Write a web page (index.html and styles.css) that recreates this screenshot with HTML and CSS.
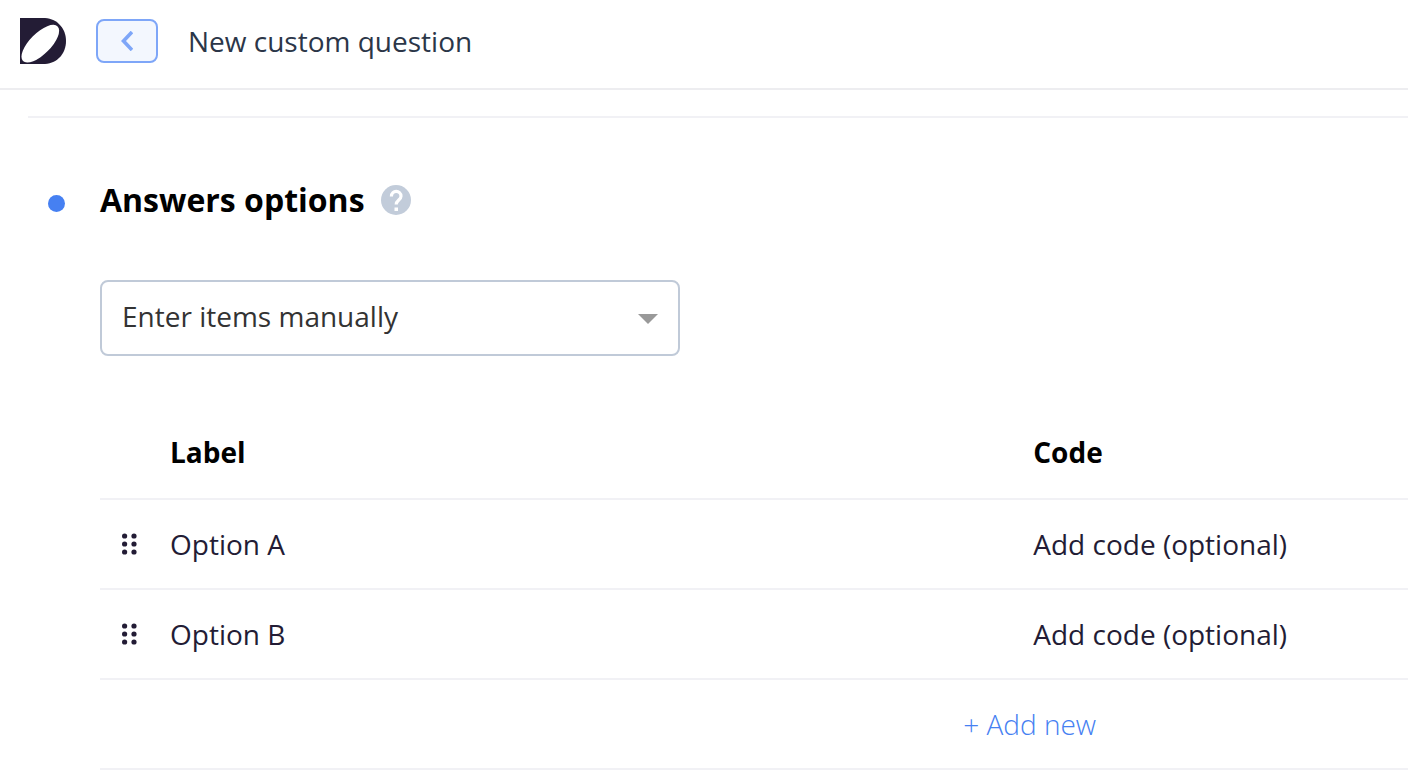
FILE: index.html
```html
<!DOCTYPE html>
<html lang="en">
<head>
    <meta charset="UTF-8">
    <meta name="viewport" content="width=device-width, initial-scale=1.0">
    <title>New custom question</title>
    <link rel="stylesheet" href="styles.css">
</head>
<body>
    <header class="topbar">
        <svg class="logo" viewBox="0 0 46 46" aria-hidden="true">
            <path fill="#231c35" d="M0 0H25C38 1 46 11 46 23S38 45 25 46H0Z"/>
            <ellipse cx="20.300" cy="25.700" rx="24.500" ry="10.500" transform="rotate(-45 20.300 25.700)" fill="#fff"/>
        </svg>
        <button class="back-button" type="button" aria-label="Back">
            <svg width="12" height="20" viewBox="0 0 12 20" aria-hidden="true">
                <path d="M11 1L2.500 10L11 19" fill="none" stroke="#7ea6f8" stroke-width="3.600"/>
            </svg>
        </button>
        <h1 class="page-title">New custom question</h1>
    </header>

    <main class="content">
        <section class="answers">
            <div class="section-head">
                <span class="dot"></span>
                <h2>Answers options</h2>
                <svg class="help" viewBox="0 0 30 30" aria-hidden="true">
                    <circle cx="15" cy="15" r="15" fill="#c2ccda"/>
                    <path d="M10.400 11.500C10.400 4.800 20 4.800 20 11.200C20 15 15.200 15.200 15.200 19.600" fill="none" stroke="#fff" stroke-width="3.200"/>
                    <rect x="13.500" y="22.500" width="3.500" height="3.500" fill="#fff"/>
                </svg>
            </div>

            <div class="section-body">
                <div class="select-wrap">
                    <select aria-label="Answers source">
                        <option>Enter items manually</option>
                    </select>
                    <svg class="arrow" width="20" height="10" viewBox="0 0 20 10" aria-hidden="true">
                        <path d="M0 0H20L10 10Z" fill="#999"/>
                    </svg>
                </div>

                <table class="options">
                    <colgroup>
                        <col class="col-drag">
                        <col class="col-label">
                        <col>
                    </colgroup>
                    <thead>
                        <tr>
                            <td></td>
                            <th scope="col">Label</th>
                            <th scope="col">Code</th>
                        </tr>
                    </thead>
                    <tbody>
                        <tr>
                            <td class="drag">
                                <svg width="16" height="22" viewBox="0 0 16 22" aria-hidden="true">
                                    <g fill="#231c35">
                                        <circle cx="2.600" cy="3" r="2.600"/><circle cx="12" cy="3" r="2.600"/>
                                        <circle cx="2.600" cy="11" r="2.600"/><circle cx="12" cy="11" r="2.600"/>
                                        <circle cx="2.600" cy="19" r="2.600"/><circle cx="12" cy="19" r="2.600"/>
                                    </g>
                                </svg>
                            </td>
                            <td><input type="text" value="Option A" aria-label="Label"></td>
                            <td><input type="text" placeholder="Add code (optional)" aria-label="Code"></td>
                        </tr>
                        <tr>
                            <td class="drag">
                                <svg width="16" height="22" viewBox="0 0 16 22" aria-hidden="true">
                                    <g fill="#231c35">
                                        <circle cx="2.600" cy="3" r="2.600"/><circle cx="12" cy="3" r="2.600"/>
                                        <circle cx="2.600" cy="11" r="2.600"/><circle cx="12" cy="11" r="2.600"/>
                                        <circle cx="2.600" cy="19" r="2.600"/><circle cx="12" cy="19" r="2.600"/>
                                    </g>
                                </svg>
                            </td>
                            <td><input type="text" value="Option B" aria-label="Label"></td>
                            <td><input type="text" placeholder="Add code (optional)" aria-label="Code"></td>
                        </tr>
                        <tr>
                            <td class="add-cell" colspan="3"><button class="add-button" type="button">+ Add new</button></td>
                        </tr>
                    </tbody>
                </table>
            </div>
        </section>
    </main>
</body>
</html>
```
FILE: styles.css
```css
* {
    box-sizing: border-box;
}
body {
    margin: 0;
    background: #fff;
    color: #231c35;
    font-family: "Open Sans", "Noto Sans", sans-serif;
    font-size: 28px;
    line-height: 40px;
}
h1, h2 {
    margin: 0;
}
svg {
    display: block;
}
button, input, select {
    font: inherit;
    color: inherit;
}

/* top bar */
.topbar {
    display: flex;
    align-items: center;
    gap: 30px;
    padding: 18px 20px 24px;
    border-bottom: 2px solid #ededf0;
}
.logo {
    width: 46px;
    height: 46px;
}
.back-button {
    display: flex;
    align-items: center;
    justify-content: center;
    width: 62px;
    height: 44px;
    padding: 0;
    border: 2px solid #7ea6f8;
    border-radius: 8px;
    background: #f3f7fe;
}
.page-title {
    color: #2b3648;
    font-size: 28px;
    font-weight: 400;
}

/* answers */
.content {
    padding: 26px 0 0 28px;
}
.answers {
    padding: 58px 0 0 20px;
    border-top: 2px solid #f1f1f5;
}
.section-head {
    display: flex;
    align-items: center;
    height: 48px;
}
.section-head h2 {
    margin: 0 16px 0 35px;
    color: #000;
    font-size: 32px;
    font-weight: 700;
}
.dot {
    width: 17px;
    height: 17px;
    margin-top: 6px;
    border-radius: 50%;
    background: #4680f2;
}
.help {
    width: 30px;
    height: 30px;
}
.section-body {
    padding: 56px 0 0 52px;
}
.select-wrap {
    position: relative;
    max-width: 580px;
}
.select-wrap select {
    display: block;
    width: 100%;
    height: 76px;
    padding: 0 60px 4px 20px;
    border: 2px solid #c0cad8;
    border-radius: 8px;
    background: #fff;
    color: #333;
    appearance: none;
}
.arrow {
    position: absolute;
    top: 34px;
    right: 22px;
    pointer-events: none;
}

/* options table */
.options {
    width: 100%;
    margin-top: 54px;
    border-spacing: 0;
    table-layout: fixed;
}
.options th, .options td {
    height: 90px;
    padding: 0;
    border-bottom: 2px solid #f1f1f5;
    text-align: left;
    vertical-align: middle;
}
.options thead th {
    padding-bottom: 4px;
    color: #000;
    font-weight: 700;
}
.col-drag {
    width: 70px;
}
.col-label {
    width: 66%;
}
.options .drag {
    padding-left: 22px;
}
.options input {
    display: block;
    width: 100%;
    height: 40px;
    padding: 0;
    border: 0;
    background: none;
}
.options input::placeholder {
    color: inherit;
    opacity: 1;
}
.options .add-cell {
    padding-left: 66%;
}
.add-button {
    display: block;
    padding: 0;
    border: 0;
    background: none;
    color: #4680f2;
    font-weight: 300;
    cursor: pointer;
}
```
